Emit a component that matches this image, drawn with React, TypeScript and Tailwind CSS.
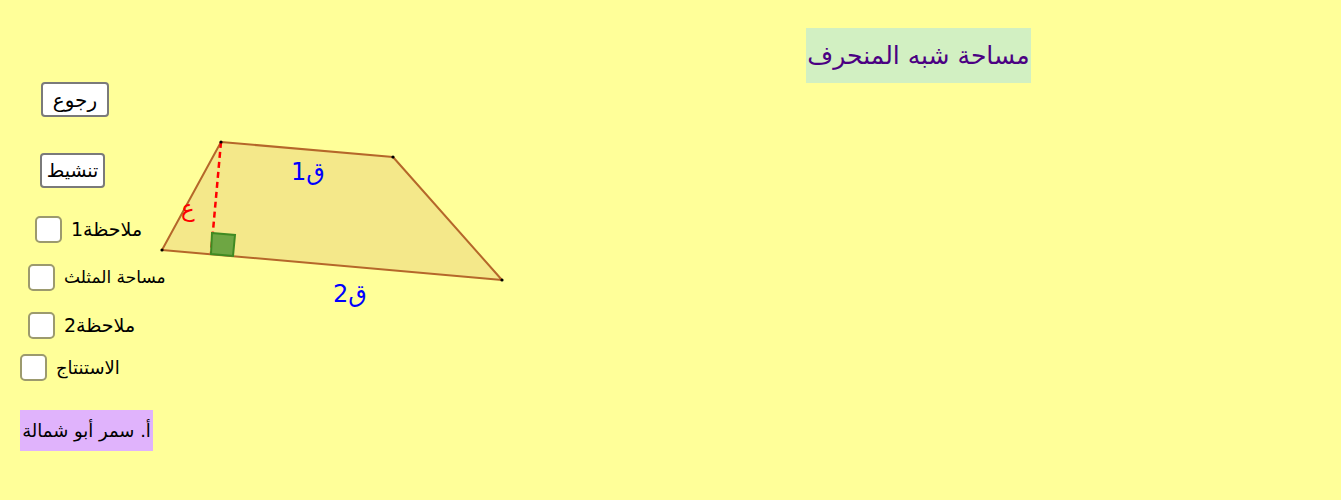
import React from "react";

function Checkbox() {
  return (
    <span className="inline-block h-[27px] w-[27px] shrink-0 rounded-[5px] border-2 border-[#9c9a6e] bg-white" />
  );
}

export default function App() {
  return (
    <div className="relative h-[500px] w-full overflow-hidden bg-[#ffff99] font-['DejaVu_Sans','Liberation_Sans',sans-serif] text-black">
      <div className="flex">
        <div className="flex w-[200px] shrink-0 flex-col items-start">
          <button className="ml-[41px] mt-[82px] flex h-[35px] w-[68px] items-center justify-center rounded-[4px] border-2 border-[#7a7a7a] bg-white text-[20px]">
            رجوع
          </button>
          <button className="ml-[40px] mt-[36px] flex h-[35px] w-[65px] items-center justify-center rounded-[4px] border-2 border-[#7a7a7a] bg-white text-[19px]">
            تنشيط
          </button>
          <div className="flex flex-col">
            <div className="ml-[35px] mt-[28px] flex items-center gap-[9px]">
              <Checkbox />
              <span className="text-[19px] leading-none">ملاحظة1</span>
            </div>
            <div className="ml-[28px] mt-[21px] flex items-center gap-[9px]">
              <Checkbox />
              <span className="text-[17px] leading-none">مساحة المثلث</span>
            </div>
            <div className="ml-[28px] mt-[21px] flex items-center gap-[9px]">
              <Checkbox />
              <span className="text-[19px] leading-none">ملاحظة2</span>
            </div>
            <div className="ml-[20px] mt-[15px] flex items-center gap-[9px]">
              <Checkbox />
              <span className="text-[18px] leading-none">الاستنتاج</span>
            </div>
          </div>
          <div
            dir="rtl"
            className="ml-[20px] mt-[29px] flex h-[41px] w-[133px] items-center justify-center bg-[#e0b3fc] text-[18px]"
          >
            أ. سمر أبو شمالة
          </div>
        </div>
        <div
          dir="rtl"
          className="ml-[606px] mt-[28px] flex h-[55px] w-[225px] items-center justify-center bg-[#d2f0c2] text-[25px] text-[#4b0082]"
        >
          مساحة شبه المنحرف
        </div>
      </div>

      <svg
        className="pointer-events-none absolute left-0 top-0"
        width="1341"
        height="500"
        viewBox="0 0 1341 500"
      >
        <polygon
          points="221,142 393,157 502,280 162,250"
          fill="#f4e88a"
          stroke="#b5672a"
          strokeWidth="2"
          strokeLinejoin="round"
        />
        <line x1="221" y1="142" x2="211" y2="253" stroke="#ff0000" strokeWidth="2.5" strokeDasharray="6 4" />
        <polygon points="212,233 235,235 233,256 211,254" fill="#6ea643" stroke="#3f8a22" strokeWidth="2" />
        <circle cx="221" cy="142" r="1.6" fill="#000" />
        <circle cx="393" cy="157" r="1.6" fill="#000" />
        <circle cx="502" cy="280" r="1.6" fill="#000" />
        <circle cx="162" cy="250" r="1.6" fill="#000" />
        <text x="291" y="180" fill="#0000ff" fontSize="24">
          ق1
        </text>
        <text x="333" y="302" fill="#0000ff" fontSize="24">
          ق2
        </text>
        <text x="181" y="216" fill="#ff0000" fontSize="23">
          ع
        </text>
      </svg>
    </div>
  );
}
